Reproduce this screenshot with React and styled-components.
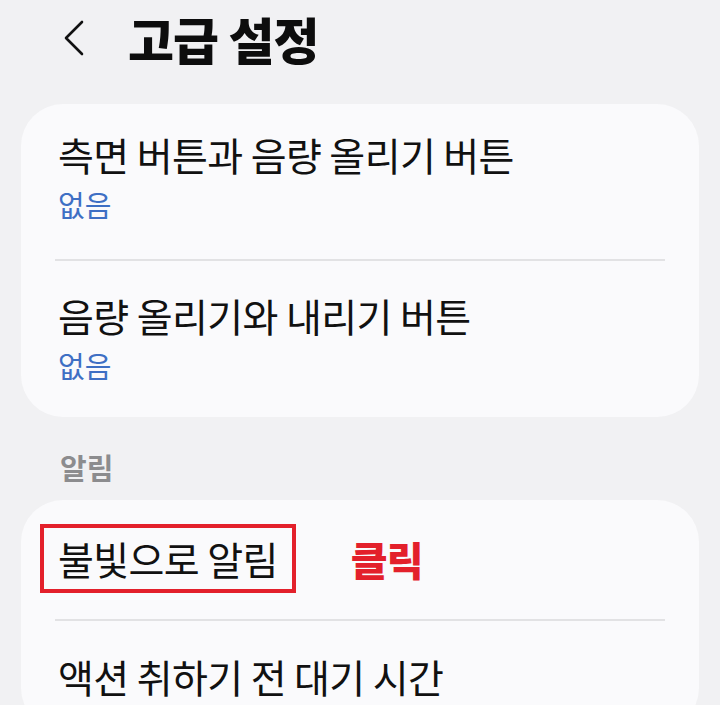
import React from "react";
import styled, { createGlobalStyle } from "styled-components";

const GlobalStyle = createGlobalStyle`
  html, body {
    margin: 0;
    padding: 0;
    background: #f1f1f3;
  }
  body {
    font-family: "Noto Sans CJK KR", "Noto Sans", sans-serif;
    color: #111;
  }
`;

const Page = styled.div`
  width: 720px;
  height: 705px;
  overflow: hidden;
  box-sizing: border-box;
  padding: 0 21px 0 21px;
  background: #f1f1f3;
`;

const Header = styled.header`
  display: flex;
  align-items: center;
  height: 76px;
  padding-left: 40px;
  margin-bottom: 28px;
`;

const BackButton = styled.button`
  display: flex;
  align-items: center;
  justify-content: center;
  width: 26px;
  height: 40px;
  padding: 0;
  margin-right: 41px;
  border: none;
  background: none;
  color: #111;
`;

const Title = styled.h1`
  margin: 0;
  font-size: 50px;
  line-height: 60px;
  font-weight: 900;
  letter-spacing: -1px;
  color: #0d0d0d;
`;

const Card = styled.section`
  background: #fafafc;
  border-radius: 42px;
  padding: 0 34px;
`;

const Row = styled.div`
  display: flex;
  align-items: center;
  gap: 55px;
  padding: ${(p) => p.$pad || "26px 0 35px"};
  & + & {
    border-top: 2px solid #e2e2e4;
  }
`;

const Texts = styled.div`
  display: flex;
  flex-direction: column;
  gap: 6px;
`;

const RowTitle = styled.div`
  font-size: 39px;
  line-height: 48px;
  font-weight: 400;
  letter-spacing: -0.6px;
  color: #111;
  padding: ${(p) => (p.$boxed ? "6px 14px 7px 14px" : "0 0 0 3px")};
  margin-left: ${(p) => (p.$boxed ? "-15px" : "0")};
  border: ${(p) => (p.$boxed ? "4px solid #e3202b" : "none")};
`;

const RowValue = styled.div`
  font-size: 29px;
  line-height: 40px;
  color: #3e6fc4;
  padding-left: 3px;
`;

const SectionLabel = styled.div`
  font-size: 29px;
  line-height: 40px;
  font-weight: 700;
  color: #8c8c8e;
  padding: 30px 0 13px 39px;
`;

const Annotation = styled.span`
  font-size: 40px;
  font-weight: 900;
  color: #e3202b;
  letter-spacing: -1px;
`;

const ChevronLeft = () => (
  <svg width="22" height="36" viewBox="0 0 22 36" fill="none">
    <path
      d="M19 2 L3 18 L19 34"
      stroke="#111"
      strokeWidth="2.6"
      strokeLinecap="round"
      strokeLinejoin="round"
    />
  </svg>
);

const buttons = [
  { title: "측면 버튼과 음량 올리기 버튼", value: "없음", pad: "26px 0 35px" },
  { title: "음량 올리기와 내리기 버튼", value: "없음", pad: "30px 0 32px" },
];

export default function App() {
  return (
    <>
      <GlobalStyle />
      <Page>
        <Header>
          <BackButton aria-label="뒤로">
            <ChevronLeft />
          </BackButton>
          <Title>고급 설정</Title>
        </Header>

        <Card>
          {buttons.map((item) => (
            <Row key={item.title} $pad={item.pad}>
              <Texts>
                <RowTitle>{item.title}</RowTitle>
                <RowValue>{item.value}</RowValue>
              </Texts>
            </Row>
          ))}
        </Card>

        <SectionLabel>알림</SectionLabel>

        <Card>
          <Row $pad="24px 0 26px">
            <RowTitle $boxed>불빛으로 알림</RowTitle>
            <Annotation>클릭</Annotation>
          </Row>
          <Row $pad="31px 0 30px">
            <RowTitle>액션 취하기 전 대기 시간</RowTitle>
          </Row>
        </Card>
      </Page>
    </>
  );
}
